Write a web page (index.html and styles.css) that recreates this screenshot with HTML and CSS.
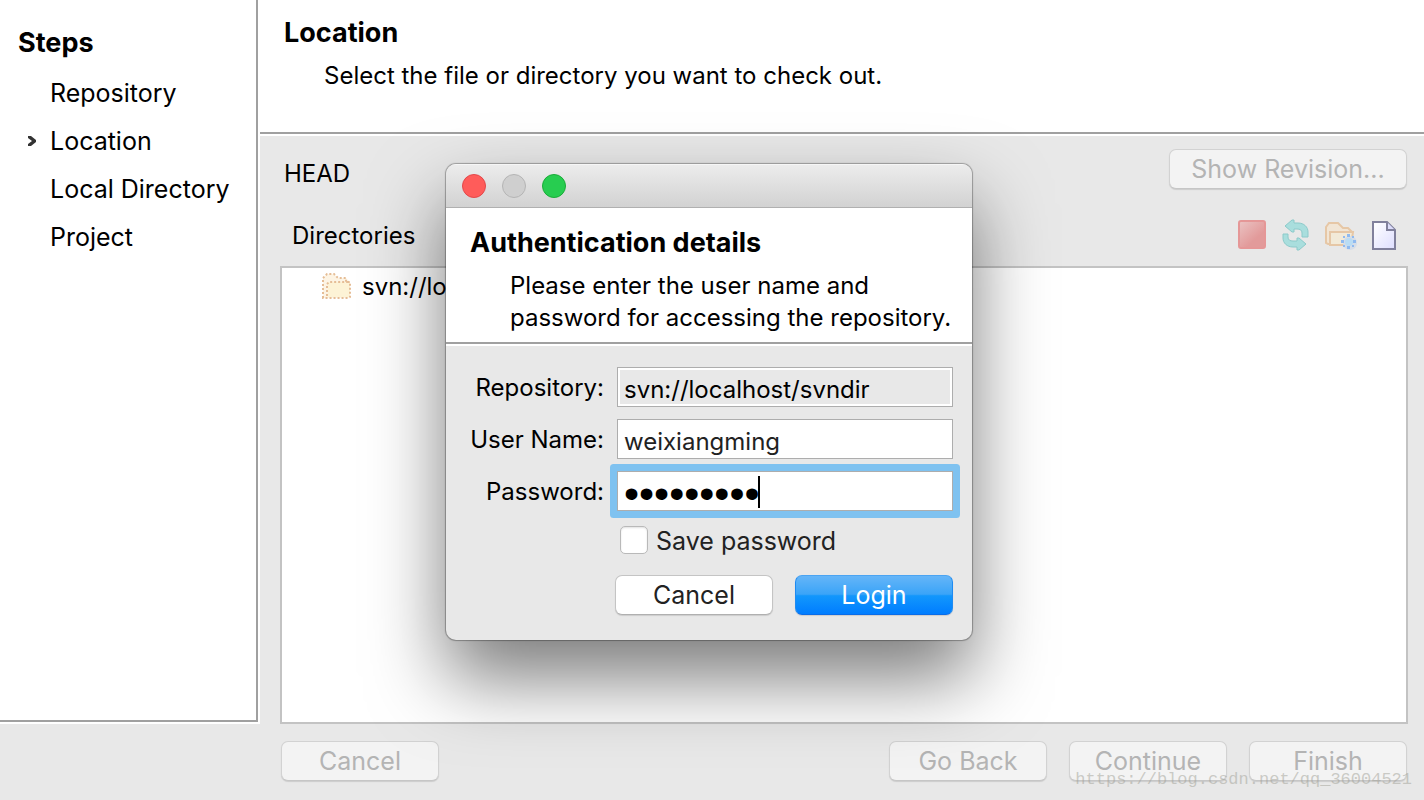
FILE: index.html
```html
<!DOCTYPE html>
<html lang="en">
<head>
    <meta charset="UTF-8">
    <meta name="viewport" content="width=device-width, initial-scale=1.0">
    <title>Check Out</title>
    <link rel="stylesheet" href="styles.css">
</head>
<body>
    <div class="wizard">
        <nav class="steps">
            <h2>Steps</h2>
            <ol>
                <li>Repository</li>
                <li class="current">
                    <svg class="arrow" viewBox="0 0 10 12"><path d="M1 1h3l5 4v2l-5 4H1v-2l4-3-4-3z"/></svg>
                    Location
                </li>
                <li>Local Directory</li>
                <li>Project</li>
            </ol>
        </nav>

        <header class="intro">
            <h2>Location</h2>
            <p>Select the file or directory you want to check out.</p>
        </header>

        <main>
            <div class="revision">
                <span>HEAD</span>
                <button class="btn wide" disabled>Show Revision...</button>
            </div>
            <div class="toolbar">
                <span>Directories</span>
                <div class="tools">
                    <button aria-label="Stop" disabled>
                        <svg viewBox="0 2 30 32">
                            <defs>
                                <linearGradient id="stop" x1="0" y1="0" x2="0.6" y2="0.7">
                                    <stop offset="0" stop-color="#ebc4c4"/>
                                    <stop offset="1" stop-color="#e29a9a"/>
                                </linearGradient>
                            </defs>
                            <rect x="2" y="3" width="26" height="27" rx="2" fill="url(#stop)" stroke="#e59797" stroke-width="2"/>
                        </svg>
                    </button>
                    <button aria-label="Refresh" disabled>
                        <svg viewBox="0 2 30 32" fill="#a9dedd" stroke="#8ccaca" stroke-width="1" stroke-linejoin="round" overflow="visible">
                            <path d="M4 8l7-6h2v3h4c6 0 10 4 10 9v5h-6v-4c0-3-2-4-5-4h-3v3h-2z"/>
                            <path d="M25 26l-7 6h-2v-3h-4c-6 0-10-4-10-9v-4h5v3c0 3 2 4 5 4h4v-3h2z"/>
                        </svg>
                    </button>
                    <button aria-label="New folder" disabled>
                        <svg viewBox="0 2 32 32">
                            <path d="M1 25V9l3-4h9l5 5h5l4 4v12H3z" fill="#f1e5d5" stroke="#e6c7a6" stroke-width="2"/>
                            <path d="M5 25V14h23l-2 13H5z" fill="#f2ead8" stroke="#e6c7a6" stroke-width="2"/>
                            <circle cx="25" cy="25" r="7" fill="#d5dde8"/>
                            <circle cx="24" cy="24" r="4" fill="#b9dcf4"/>
                            <path d="M22 16h3v3h-3zM22 28h3v3h-3zM16 22h3v3h-3zM28 22h3v3h-3zM18 18h2v2h-2zM27 27h2v2h-2zM27 18h2v2h-2zM18 27h2v2h-2z" fill="#8fbaf0"/>
                        </svg>
                    </button>
                    <button aria-label="New file">
                        <svg viewBox="0 2 26 32">
                            <defs>
                                <linearGradient id="page" x1="0" y1="0" x2="1" y2="1">
                                    <stop offset="0" stop-color="#fff"/>
                                    <stop offset="1" stop-color="#dedeff"/>
                                </linearGradient>
                            </defs>
                            <path d="M2 4h14l8 8v19H2z" fill="url(#page)" stroke="#80809c" stroke-width="2"/>
                            <path d="M16 4v8h8" fill="#dcdcfa" stroke="#80809c" stroke-width="2"/>
                        </svg>
                    </button>
                </div>
            </div>
            <div class="tree">
                <svg class="folder" viewBox="0 0 30 26">
                    <path d="M1 25V5l4-4h7l4 4h8l4 4v15l-2 1z" fill="#fdf4e4"/>
                    <path d="M6 9h22v15H6z" fill="#fdf3d6"/>
                    <path d="M1 25V5l4-4h7l4 4h8v4h4v15l-2 1zM5 23V11l2-2h19" fill="none" stroke="#e5bd96" stroke-width="2" stroke-dasharray="2 2"/>
                </svg>
                <span>svn://localhost</span>
            </div>
        </main>

        <footer>
            <button class="btn" disabled>Cancel</button>
            <div class="next">
                <button class="btn" disabled>Go Back</button>
                <button class="btn" disabled>Continue</button>
                <button class="btn" disabled>Finish</button>
            </div>
        </footer>
        <span class="watermark">https://blog.csdn.net/qq_36004521</span>
    </div>

    <!-- Login window -->
    <form class="dialog" onsubmit="return false">
        <div class="titlebar">
            <button type="button" class="light red" aria-label="Close"></button>
            <button type="button" class="light" aria-label="Minimize" disabled></button>
            <button type="button" class="light green" aria-label="Zoom"></button>
        </div>
        <div class="about">
            <h2>Authentication details</h2>
            <p>Please enter the user name and password for accessing the repository.</p>
        </div>
        <div class="fields">
            <label for="repo">Repository:</label>
            <input type="text" id="repo" value="svn://localhost/svndir" readonly>
            <label for="user">User Name:</label>
            <input type="text" id="user" value="weixiangming">
            <label for="pass">Password:</label>
            <div class="focused">
                <input type="password" id="pass" value="123456789">
                <i class="caret"></i>
            </div>
            <div class="save">
                <input type="checkbox" id="save">
                <label for="save">Save password</label>
            </div>
            <div class="actions">
                <button type="button" class="btn">Cancel</button>
                <button type="submit" class="btn primary">Login</button>
            </div>
        </div>
    </form>
</body>
</html>
```
FILE: styles.css
```css
* {
    box-sizing: border-box;
    margin: 0;
    padding: 0;
}
body {
    font-family: Inter, "Liberation Sans", sans-serif;
    font-size: 24px;
    line-height: 32px;
    color: #000;
    background-color: #e8e8e8;
    overflow: hidden;
}
h2 {
    font-size: 27px;
    font-weight: 700;
    line-height: 32px;
}
button, input {
    font: inherit;
    color: inherit;
}

.wizard {
    display: grid;
    grid-template-columns: 260px 1fr;
    grid-template-rows: auto 1fr auto;
    height: 100vh;
    position: relative;
}

/* Steps */
.steps {
    grid-row: 1 / 3;
    background-color: #fff;
    border-right: 2px solid #fff;
    border-bottom: 2px solid #fff;
    box-shadow: inset -2px -2px #a0a0a0;
    padding: 27px 18px;
}
.steps ol {
    list-style: none;
    padding-top: 10px;
}
.steps li {
    font-size: 25px;
    line-height: 48px;
    padding-left: 32px;
    white-space: nowrap;
    position: relative;
}
.arrow {
    position: absolute;
    left: 9px;
    top: 18px;
    width: 10px;
    height: 12px;
    fill: #333;
}

.intro {
    background-color: #fff;
    border-bottom: 2px solid #fff;
    box-shadow: inset 0 -2px #a0a0a0;
    padding: 17px 24px 42px;
}
.intro p {
    padding: 11px 0 0 40px;
}

main {
    display: flex;
    flex-direction: column;
    padding: 12px 16px 0 20px;
}
.revision, .toolbar {
    display: flex;
    align-items: center;
    justify-content: space-between;
}
.revision {
    padding: 0 1px 0 4px;
}
.revision span {
    padding-top: 10px;
}
.toolbar {
    padding: 30px 11px 14px 12px;
}
.tools {
    display: flex;
    gap: 14px;
}
.tools button {
    display: flex;
    border: 0;
    background: none;
}
.tools svg {
    height: 32px;
}
.tree {
    flex: 1;
    display: flex;
    align-items: flex-start;
    gap: 10px;
    padding: 3px 40px;
    background-color: #fff;
    border: 2px solid #c3c3c3;
}
.folder {
    width: 30px;
    height: 26px;
    margin-top: 2px;
}

footer {
    display: flex;
    justify-content: space-between;
    grid-column: 2;
    padding: 17px 17px 19px 21px;
}
.next {
    display: flex;
    gap: 22px;
}

.btn {
    width: 158px;
    height: 40px;
    font-size: 25px;
    line-height: 32px;
    color: #222;
    background-color: #fff;
    border: 1px solid #c4c4c4;
    border-bottom-color: #b0b0b0;
    border-radius: 7px;
    box-shadow: 0 1px 1px rgba(0, 0, 0, 0.12);
}
.btn.wide {
    width: 238px;
}
.btn:disabled {
    color: #b4b4b4;
    background-color: #f3f3f3;
    border-color: #d2d2d2;
    border-bottom-color: #c6c6c6;
}
.btn.primary {
    color: #fff;
    background: linear-gradient(#65b5f8, #3aa4f8 48%, #1297fc 52%, #007dff);
    border-color: #4ba4f2 #1e8bf2 #0a6ce8;
}

.watermark {
    position: absolute;
    right: 12px;
    bottom: 8px;
    font-family: "Liberation Mono", monospace;
    font-size: 17px;
    line-height: 24px;
    color: rgba(160, 160, 150, 0.5);
}

/* Login window */
.dialog {
    position: absolute;
    left: 446px;
    top: 164px;
    width: 526px;
    border-radius: 10px;
    background-color: #e8e8e8;
    box-shadow: 0 0 1px 1px rgba(0, 0, 0, 0.3), 0 38px 76px rgba(0, 0, 0, 0.52);
    overflow: hidden;
}
.titlebar {
    display: flex;
    align-items: center;
    gap: 16px;
    height: 44px;
    padding: 0 16px;
    background: linear-gradient(#ececec, #d2d2d2);
    border-top: 1px solid #f6f6f6;
    border-bottom: 1px solid #b0b0b0;
}
.light {
    width: 24px;
    height: 24px;
    border: 1px solid #b4b4b4;
    border-radius: 50%;
    background-color: #cfcfcf;
}
.light.red {
    background-color: #ff5c5a;
    border-color: #e2484a;
}
.light.green {
    background-color: #27cd50;
    border-color: #1aac38;
}
.about {
    background-color: #fff;
    border-bottom: 2px solid #fff;
    box-shadow: inset 0 -2px #a0a0a0;
    padding: 19px 16px 10px 24px;
}
.about p {
    padding: 11px 0 0 40px;
}
.fields {
    display: grid;
    grid-template-columns: 158px 1fr;
    column-gap: 13px;
    row-gap: 12px;
    align-items: center;
    padding: 21px 19px 25px 0;
}
.fields label {
    padding-top: 2px;
    text-align: right;
}
.fields input[type="text"], .fields input[type="password"] {
    display: block;
    width: 100%;
    height: 40px;
    padding: 4px 6px 0;
    color: #222;
    background-color: #fff;
    border: 1px solid #adadad;
    outline: 0;
}
.fields input[type="password"] {
    font-family: "Liberation Sans", Arial, sans-serif;
    font-size: 43px;
    color: #000;
}
.fields input[readonly] {
    color: #000;
    background-color: #e8e8e8;
    box-shadow: inset 0 0 0 2px #fff;
}
.focused {
    position: relative;
    border-radius: 1px;
    box-shadow: 0 0 0 7px #7fc2f0;
}
.caret {
    position: absolute;
    left: 141px;
    top: 5px;
    width: 2px;
    height: 32px;
    background-color: #000;
}
.save, .actions {
    grid-column: 2;
    display: flex;
    align-items: center;
}
.save {
    gap: 8px;
    padding: 0 3px;
    font-size: 25px;
    color: #222;
}
.save input {
    appearance: none;
    width: 28px;
    height: 28px;
    background-color: #fff;
    border: 1px solid #b9b9b9;
    border-radius: 5px;
    box-shadow: inset 0 1px 2px rgba(0, 0, 0, 0.12);
}
.actions {
    justify-content: space-between;
    padding-top: 6px;
    margin-left: -2px;
}
```
